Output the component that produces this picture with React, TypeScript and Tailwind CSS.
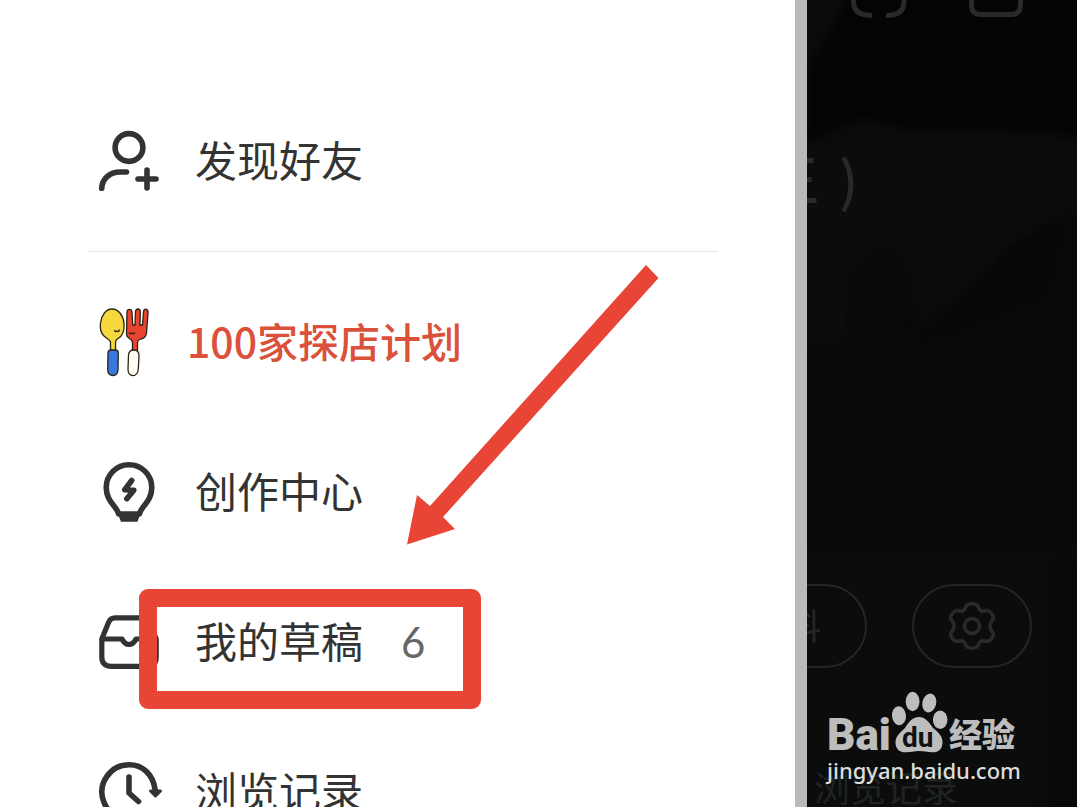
import type { ReactNode } from 'react'
import { clsx } from 'clsx'

interface MenuItem {
  id: string
  label: string
  icon: ReactNode
  accent?: boolean
  count?: number
  marked?: boolean
}

function FriendIcon() {
  return (
    <svg viewBox="0 0 64 64" className="w-16 h-16 shrink-0" fill="none" stroke="#333" strokeWidth="5.6" strokeLinecap="round">
      <circle cx="32" cy="18.5" r="13.9" />
      <path d="M29.5 43H23C12.500 43 5.200 50 4.700 59.300" />
      <path d="M50 41v18M41 50h18" />
    </svg>
  )
}

function CutleryIcon() {
  return (
    <svg viewBox="0 0 56 72" className="w-14 h-[72px] shrink-0" stroke="#2b2412" strokeWidth="1.3" strokeLinejoin="round">
      <path d="M13.500 45V36C13 33.500 10 33 7 30C3.500 26.500 2.800 22 3.500 17C4.500 9 9 3 15 3C22 3 26.500 10 27 18C27.500 25 25.500 30 21 32.500C19 33.500 18.500 35 18.500 37V45Z" fill="#f6d83c" />
      <path d="M11 47Q11 44 14 44H18.500Q21.300 44 21.300 47L21 64Q20.500 69.500 16 69.500Q11 69.500 10.700 64Z" fill="#3778e0" />
      <path d="M35.500 45V37Q35.500 34 32.500 32.500Q29.500 31 29.500 27L30 6Q30.200 3.300 32.500 3.300Q34.700 3.300 35 6L35.700 19H38L38.500 6Q38.600 3 41 3Q43.300 3 43.300 6L43 19H45.500L46.500 6Q46.800 3 49 3.200Q51.300 3.500 51 7L49.500 27Q49 32 44 33Q40.500 34 40.500 37V45Z" fill="#ea4330" />
      <path d="M31.500 49Q32 44 36.500 44Q42.300 44 42 50L41.300 63Q40.500 69.700 36 69.700Q31 69.500 31 63Z" fill="#fffef4" />
      <path d="M17.500 24Q18 26.500 20 25Q21.500 26.500 22.500 23.500M32 26.500Q33.500 29 35 27Q36.500 28.500 38 26.500" fill="none" />
    </svg>
  )
}

function BulbIcon() {
  return (
    <svg viewBox="0 0 64 64" className="w-16 h-16 shrink-0" fill="none" stroke="#333" strokeWidth="5.6" strokeLinecap="round" strokeLinejoin="round">
      <path d="M21.500 54C20.500 46.500 9.200 42 9.200 27.500A22.800 22.800 0 0 1 54.800 27.500C54.800 42 43.500 46.500 42.500 54Z" />
      <path d="M20 52H44L40.500 61.700H24Z" fill="#333" stroke="none" />
      <path d="M34.700 20.500L27.800 29.700L36.800 30.300L29.800 38.700" />
    </svg>
  )
}

function DraftIcon() {
  return (
    <svg viewBox="0 0 64 64" className="w-16 h-16 shrink-0" fill="none" stroke="#333" strokeWidth="5.2" strokeLinejoin="round">
      <path d="M4.800 29L11.500 12.500Q13.500 7.800 18 7.800H46Q50.500 7.800 52.500 12.500L59.200 29V47Q59.200 56.300 50 56.300H14Q4.800 56.300 4.800 47Z" />
      <path d="M5 29H25Q27.500 34.200 32 34.500Q36.500 34.200 39 29H59" />
    </svg>
  )
}

function HistoryIcon() {
  return (
    <svg viewBox="0 0 64 64" className="w-16 h-16 shrink-0 overflow-visible" fill="none" stroke="#333" strokeWidth="5.6" strokeLinecap="round" strokeLinejoin="round">
      <path d="M58.200 30C56 14 45.500 4.800 32 4.800A27.200 27.200 0 1 0 50 52.500" />
      <path d="M32 17V33L41.500 41.500" />
      <path d="M53.500 31H63.500L58.500 36Z" fill="#333" strokeWidth="3" />
    </svg>
  )
}

const friendItem: MenuItem = { id: 'friends', label: '发现好友', icon: <FriendIcon /> }

const menuItems: MenuItem[] = [
  { id: 'explore', label: '100家探店计划', icon: <CutleryIcon />, accent: true },
  { id: 'creator', label: '创作中心', icon: <BulbIcon /> },
  { id: 'drafts', label: '我的草稿', icon: <DraftIcon />, count: 6, marked: true },
  { id: 'history', label: '浏览记录', icon: <HistoryIcon /> }
]

function MenuRow({ item }: { item: MenuItem }) {
  return (
    <a href={`#${item.id}`} className="relative flex items-center gap-[34px] h-[150px] pl-[9px]">
      {item.icon}
      <span
        className={clsx(
          'pb-1 leading-[60px] whitespace-nowrap',
          item.accent ? 'text-[41px] text-[#dc513a] font-medium' : 'text-[42px] text-[#333333]'
        )}
      >
        {item.label}
      </span>
      {item.count !== undefined && (
        <span className="ml-1 font-['Lato'] text-[42px] leading-[60px] text-[#666666]">{item.count}</span>
      )}
      {item.marked && (
        <span className="absolute left-[51px] top-[22px] w-[342px] h-[120px] border-[18px] border-[#e84537] rounded-[9px]" />
      )}
    </a>
  )
}

function Watermark() {
  return (
    <div className="absolute left-5 bottom-6 flex flex-col">
      <div className="flex items-end h-[66px] text-[#bdbdbd]">
        <span className="w-[62px] font-['Roboto'] font-black text-[44px] leading-[44px]">Bai</span>
        <svg viewBox="0 0 60 66" className="w-[60px] h-[66px] shrink-0" fill="#bdbdbd">
          <ellipse cx="10" cy="24.700" rx="7" ry="9.500" transform="rotate(-6 10 24.7)" />
          <ellipse cx="23.600" cy="10.500" rx="6.900" ry="9.700" />
          <ellipse cx="40.300" cy="12" rx="6.900" ry="9.500" transform="rotate(14 40.3 12)" />
          <ellipse cx="51.200" cy="28.700" rx="7.300" ry="9.200" />
          <path d="M30 26C37 26 40.500 32 44 37C49 41 54 45 53.500 52C53 59 49 61.700 43 61.300C38 61 35 60 30 60C25 60 22 61.300 17 61.300C10 61.300 6.500 58 6.500 51C6.500 45 12 41 16 37C20 31 23 26 30 26Z" />
          <text x="13" y="56" fill="#101111" fontFamily="Roboto, sans-serif" fontWeight="700" fontSize="28">du</text>
        </svg>
        <span className="pb-1 text-[33px] leading-[40px] font-black whitespace-nowrap">经验</span>
      </div>
      <span className="font-['Noto_Sans'] font-medium text-[22px] leading-[26px] text-[#dddddd]">jingyan.baidu.com</span>
    </div>
  )
}

function DimmedProfile() {
  return (
    <section className="relative flex flex-col w-[270px] shrink-0 overflow-hidden bg-[#0b0d0c]">
      {/* Cover photo seen through the dark overlay */}
      <svg viewBox="0 0 270 807" className="absolute inset-0 w-full h-full" preserveAspectRatio="none">
        <defs>
          <filter id="soften" colorInterpolationFilters="sRGB"><feGaussianBlur stdDeviation="6" /></filter>
        </defs>
        <g filter="url(#soften)">
          <path d="M50 -20H290V138L190 130H100L55 118L0 145V70Z" fill="#030502" />
          <path d="M-20 355L40 340Q35 250 80 248Q105 255 110 330L190 260L250 215L290 210V550H-20Z" fill="#070908" />
          <path d="M110 340L170 300L195 250L250 220L235 290L160 320Z" fill="#050704" />
          <path d="M240 560H290V820H240Z" fill="#070908" />
        </g>
      </svg>

      <div className="relative flex flex-col">
        <div className="flex gap-[62px] pl-11 h-5">
          <svg viewBox="0 0 56 20" className="w-14 h-5" fill="none" stroke="#292929" strokeWidth="5">
            <path d="M2.500 -4V2Q2.500 15.500 21 15.500M53 -4V2Q53 15.500 35 15.500" />
          </svg>
          <svg viewBox="0 0 54 20" className="w-[54px] h-5" fill="none" stroke="#292929" strokeWidth="5">
            <path d="M2.500 -4V5Q2.500 14.500 12 14.500H42Q51.500 14.500 51.500 5V-4" />
          </svg>
        </div>

        <p className="mt-32 -ml-[42px] flex gap-5 text-[54px] leading-[60px] font-medium text-[#292929] whitespace-nowrap">
          <span>王</span>
          <span>)</span>
        </p>

        <div className="mt-[376px] flex gap-[45px]">
          <button className="-ml-[60px] w-[120px] h-[84px] shrink-0 pr-11 pb-1 flex items-center justify-end rounded-full border-2 border-[#242525] text-[36px] leading-none text-[#242525]">
            料
          </button>
          <button aria-label="设置" className="w-[120px] h-[84px] shrink-0 flex items-center justify-center rounded-full border-2 border-[#242525]">
            <svg viewBox="0 0 48 50" className="w-12 h-[50px]" fill="none" stroke="#292a2a" strokeWidth="3.500" strokeLinejoin="round">
              <path d="M19 4Q24 1.500 29 4L32 9Q33 10.500 35 10L40 9.500Q45 12 45.500 17.500L42.500 22Q41.500 25 42.500 28L45.500 32.500Q45 38 40 40.500L35 40Q33 39.500 32 41L29 46Q24 48.500 19 46L16 41Q15 39.500 13 40L8 40.500Q3 38 2.500 32.500L5.500 28Q6.500 25 5.500 22L2.500 17.500Q3 12 8 9.500L13 10Q15 10.500 16 9Z" />
              <circle cx="24" cy="25" r="7.500" />
            </svg>
          </button>
        </div>

        <p className="mt-[98px] pl-[7px] text-[36px] leading-[40px] text-[#212222] whitespace-nowrap">浏览记录</p>
      </div>

      <Watermark />
    </section>
  )
}

export default function App() {
  return (
    <div className="flex h-screen overflow-hidden bg-white font-['Noto_Sans_CJK_SC',sans-serif]">
      <main className="relative flex-1 min-w-0 pt-[86px] pl-[88px] pr-[77px]">
        <nav>
          <MenuRow item={friendItem} />
          <hr className="my-[15px] h-px border-0 bg-[#e6e6e6]" />
          {menuItems.map((item) => (
            <MenuRow key={item.id} item={item} />
          ))}
        </nav>

        {/* Arrow pointing at the drafts row */}
        <svg viewBox="0 0 252 280" className="absolute left-[407px] top-[265px] w-[252px] h-[280px] pointer-events-none" fill="#e84537">
          <path d="M239 0L251.500 13L36 252L48 264L0 279.500L10 230L23 241Z" />
        </svg>
      </main>

      <div className="w-3 shrink-0 bg-[#bababa]" />
      <DimmedProfile />
    </div>
  )
}
